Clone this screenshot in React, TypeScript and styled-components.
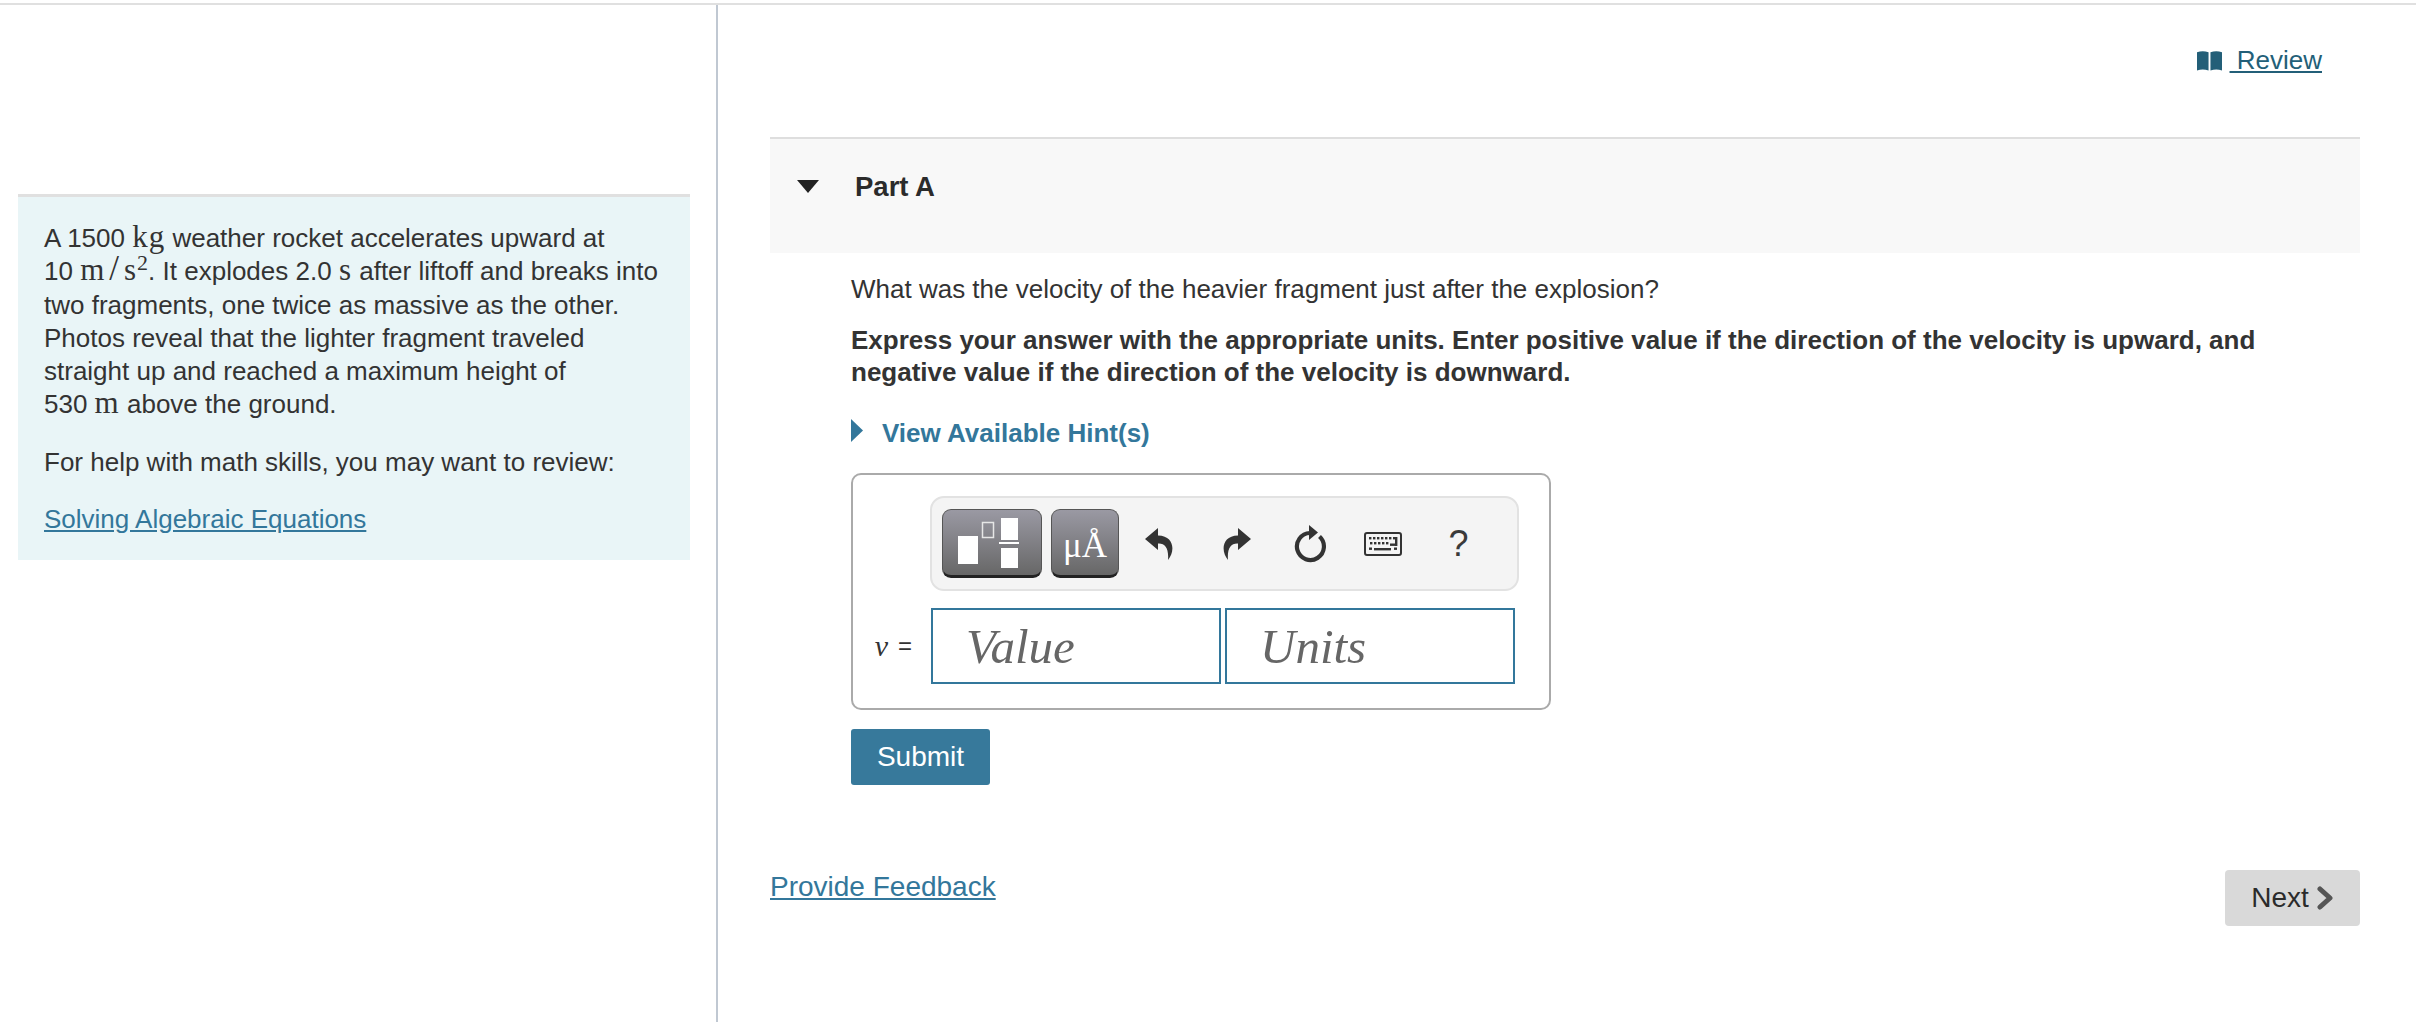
import React from 'react';
import styled, { createGlobalStyle } from 'styled-components';

const GlobalStyle = createGlobalStyle`
  html, body {
    margin: 0;
    padding: 0;
    background: #fff;
  }
  body {
    font-family: "Liberation Sans", Arial, sans-serif;
    color: #333;
  }
`;

const Page = styled.div`
  display: flex;
  width: 2416px;
  height: 1019px;
  box-sizing: border-box;
  border-top: 2px solid #e0e0e0;
  margin: 3px 0 0;
  overflow: hidden;
`;

const LeftColumn = styled.aside`
  width: 718px;
  flex-shrink: 0;
  box-sizing: border-box;
  border-right: 2px solid #c0c8d2;
  padding: 189px 26px 0 18px;
`;

const InfoPanel = styled.section`
  box-sizing: border-box;
  width: 672px;
  height: 366px;
  background: #e9f5f7;
  border-top: 3px solid #e0e0e0;
  padding: 25px 0 0 26px;
  font-size: 26px;
  line-height: 33.3px;
`;

const InfoText = styled.p`
  margin: 0 0 24px;
  white-space: nowrap;
`;

const MathUnit = styled.span`
  font-family: "Liberation Serif", serif;
  font-size: 31px;
  line-height: 0;
  letter-spacing: 1px;
`;

const MathSlash = styled.span`
  font-size: 35px;
  margin: 0 4px;
`;

const Sup = styled.sup`
  font-family: "Liberation Serif", serif;
  font-size: 22px;
  line-height: 0;
`;

const TextLink = styled.a`
  color: #33779b;
  text-decoration: underline;
  font-size: 26px;
`;

const RightColumn = styled.main`
  flex: 1;
  box-sizing: border-box;
  padding: 0 56px 0 52px;
`;

const ReviewRow = styled.div`
  display: flex;
  justify-content: flex-end;
  align-items: center;
  gap: 8px;
  height: 132px;
  padding: 0 38px 21px 0;
  box-sizing: border-box;
`;

const ReviewLink = styled.a`
  display: flex;
  align-items: center;
  color: #235f78;
  font-size: 26px;
  text-decoration: underline;
  white-space: pre;
`;

const PartHeader = styled.header`
  display: flex;
  align-items: flex-start;
  box-sizing: border-box;
  height: 116px;
  background: #f8f8f8;
  border-top: 2px solid #dedede;
  padding: 31px 0 0 27px;
`;

const Caret = styled.svg`
  display: block;
  flex-shrink: 0;
`;

const PartCaret = styled(Caret)`
  margin-top: 10px;
`;

const PartTitle = styled.h2`
  margin: 0 0 0 36px;
  font-size: 27.5px;
  line-height: 34px;
  font-weight: 700;
  color: #2b2b2b;
`;

const PartBody = styled.div`
  padding: 20px 0 0 81px;
`;

const Question = styled.p`
  margin: 0 0 18px;
  font-size: 26px;
  line-height: 33px;
`;

const Instruction = styled.p`
  margin: 0 0 28px;
  font-size: 26px;
  line-height: 32px;
  font-weight: 700;
`;

const HintRow = styled.div`
  display: flex;
  align-items: center;
  height: 34px;
  gap: 19px;
  margin-bottom: 23px;
  color: #33779b;
  font-size: 26px;
  font-weight: 700;
`;

const HintCaret = styled(Caret)`
  margin-top: -6px;
`;

const AnswerBox = styled.div`
  box-sizing: border-box;
  width: 700px;
  height: 237px;
  border: 2px solid #aaa;
  border-radius: 10px;
  padding: 21px 0 0 22px;
`;

const Toolbar = styled.div`
  display: flex;
  align-items: center;
  box-sizing: border-box;
  width: 589px;
  height: 95px;
  margin-left: 55px;
  padding: 0 0 0 10px;
  background: #f4f4f4;
  border: 2px solid #e2e2e2;
  border-radius: 14px;
`;

const TemplateButton = styled.div<{ $width: number }>`
  display: flex;
  align-items: center;
  justify-content: center;
  box-sizing: border-box;
  width: ${({ $width }) => $width}px;
  height: 69px;
  margin-right: 9px;
  border: 1px solid #555;
  border-bottom: 3px solid #222;
  border-radius: 9px;
  background: linear-gradient(#9a99a3, #676767);
`;

const FractionWrap = styled.span`
  display: flex;
  margin-right: 8px;
`;

const SymbolLabel = styled.span`
  font-family: "Liberation Serif", serif;
  font-size: 35px;
  line-height: 1;
  color: #fff;
  margin-top: 6px;
`;

const ToolIcon = styled.div<{ $width: number }>`
  display: flex;
  align-items: center;
  justify-content: center;
  width: ${({ $width }) => $width}px;
  height: 60px;
  color: #333;
`;

const HelpGlyph = styled.span`
  font-size: 36px;
  color: #3a3a3a;
  line-height: 1;
`;

const InputRow = styled.div`
  display: flex;
  align-items: center;
  margin-top: 17px;
`;

const VarLabel = styled.div`
  display: flex;
  align-items: center;
  justify-content: flex-end;
  gap: 10px;
  width: 56px;
  flex-shrink: 0;
  font-size: 24px;
  color: #333;
  padding-right: 19px;
  box-sizing: border-box;
`;

const VarItalic = styled.i`
  font-family: "Liberation Serif", serif;
  font-size: 30px;
`;

const InputBox = styled.div`
  box-sizing: border-box;
  width: 290px;
  height: 76px;
  margin-right: 4px;
  border: 2px solid #33779b;
  padding: 12px 0 0 33px;
  font-family: "Liberation Serif", serif;
  font-style: italic;
  font-size: 49px;
  line-height: 50px;
  color: #666;
`;

const SubmitButton = styled.button`
  display: block;
  width: 139px;
  height: 56px;
  margin-top: 19px;
  border: none;
  border-radius: 3px;
  background: #37799b;
  color: #fff;
  font-family: "Liberation Sans", Arial, sans-serif;
  font-size: 28px;
`;

const FooterRow = styled.div`
  display: flex;
  justify-content: space-between;
  align-items: flex-start;
  margin-top: 85px;
`;

const FeedbackLink = styled(TextLink)`
  margin-top: 1px;
  font-size: 28px;
`;

const NextButton = styled.button`
  display: flex;
  align-items: center;
  justify-content: center;
  gap: 7px;
  width: 135px;
  height: 56px;
  border: none;
  border-radius: 4px;
  background: #d9d9d9;
  color: #2b2b2b;
  font-family: "Liberation Sans", Arial, sans-serif;
  font-size: 28px;
`;

const BookIcon = () => (
  <svg width="25" height="22" viewBox="0 0 26 22" fill="#235f78">
    <path d="M0 2 C4 0.5 8 0.5 12 2 V21 C8 19.5 4 19.5 0 21 Z" />
    <path d="M14 2 C18 0.5 22 0.5 26 2 V21 C22 19.5 18 19.5 14 21 Z" />
  </svg>
);

const FractionIcon = () => (
  <svg width="61" height="50" viewBox="0 0 61 50" fill="#fff">
    <rect x="0" y="18" width="20" height="28" />
    <rect x="24.5" y="4.5" width="11" height="15" fill="none" stroke="#e6e6e6" strokeWidth="1.5" />
    <rect x="43" y="0" width="17" height="22" />
    <rect x="41" y="24" width="20" height="2" />
    <rect x="43" y="30" width="17" height="20" />
  </svg>
);

const UndoIcon = ({ flip }: { flip?: boolean }) => (
  <svg width="28" height="32" viewBox="0 0 28 32" fill="#333" style={flip ? { transform: 'scaleX(-1)' } : undefined}>
    <path d="M13 0 L0 11 L13 22 V15.5 C20 15 24 20 23 32 C30 24 30 8 13 7.5 Z" />
  </svg>
);

const RefreshIcon = () => (
  <svg width="34" height="38" viewBox="0 0 34 38" fill="none">
    <path d="M25.5 11.5 A13.5 13.5 0 1 1 16 8" stroke="#333" strokeWidth="4.2" />
    <path d="M15 0 L24 7.5 L15 15 Z" fill="#333" />
  </svg>
);

const KeyboardIcon = () => (
  <svg width="38" height="24" viewBox="0 0 38 24">
    <rect x="1" y="1" width="36" height="22" rx="2" fill="none" stroke="#333" strokeWidth="2" />
    <g fill="#333">
      {[5, 9, 13, 17, 21, 25, 29].map((x) => (
        <rect key={`a${x}`} x={x} y="5" width="2.4" height="2.4" />
      ))}
      {[6, 10, 14, 18, 22].map((x) => (
        <rect key={`b${x}`} x={x} y="10" width="2.4" height="2.4" />
      ))}
      <rect x="31" y="5" width="2.4" height="9" />
      <rect x="26" y="11.5" width="6" height="2.4" />
      <rect x="5" y="15.5" width="3" height="2.4" />
      <rect x="10" y="16" width="17" height="2.4" />
      <rect x="30" y="15.5" width="3" height="2.4" />
    </g>
  </svg>
);

export default function App() {
  return (
    <>
      <GlobalStyle />
      <Page>
        <LeftColumn>
          <InfoPanel>
            <InfoText>
              A 1500 <MathUnit>kg</MathUnit> weather rocket accelerates upward at
              <br />
              10 <MathUnit>m<MathSlash>/</MathSlash>s</MathUnit>
              <Sup>2</Sup>. It explodes 2.0 <MathUnit>s</MathUnit> after liftoff and breaks into
              <br />
              two fragments, one twice as massive as the other.
              <br />
              Photos reveal that the lighter fragment traveled
              <br />
              straight up and reached a maximum height of
              <br />
              530 <MathUnit>m</MathUnit> above the ground.
            </InfoText>
            <InfoText>For help with math skills, you may want to review:</InfoText>
            <TextLink href="#">Solving Algebraic Equations</TextLink>
          </InfoPanel>
        </LeftColumn>
        <RightColumn>
          <ReviewRow>
            <BookIcon />
            <ReviewLink href="#"> Review</ReviewLink>
          </ReviewRow>
          <PartHeader>
            <PartCaret width="22" height="13" viewBox="0 0 22 13">
              <path d="M0 0 H22 L11 13 Z" fill="#222" />
            </PartCaret>
            <PartTitle>Part A</PartTitle>
          </PartHeader>
          <PartBody>
            <Question>What was the velocity of the heavier fragment just after the explosion?</Question>
            <Instruction>
              Express your answer with the appropriate units. Enter positive value if the direction of the velocity is upward, and
              <br />
              negative value if the direction of the velocity is downward.
            </Instruction>
            <HintRow>
              <HintCaret width="12" height="23" viewBox="0 0 12 23">
                <path d="M0 0 L12 11.5 L0 23 Z" fill="#33779b" />
              </HintCaret>
              View Available Hint(s)
            </HintRow>
            <AnswerBox>
              <Toolbar>
                <TemplateButton $width={100}>
                  <FractionWrap>
                    <FractionIcon />
                  </FractionWrap>
                </TemplateButton>
                <TemplateButton $width={68}>
                  <SymbolLabel>μÅ</SymbolLabel>
                </TemplateButton>
                <ToolIcon $width={62}>
                  <UndoIcon />
                </ToolIcon>
                <ToolIcon $width={94}>
                  <UndoIcon flip />
                </ToolIcon>
                <ToolIcon $width={54}>
                  <RefreshIcon />
                </ToolIcon>
                <ToolIcon $width={89}>
                  <KeyboardIcon />
                </ToolIcon>
                <ToolIcon $width={63}>
                  <HelpGlyph>?</HelpGlyph>
                </ToolIcon>
              </Toolbar>
              <InputRow>
                <VarLabel>
                  <VarItalic>v</VarItalic>
                  <span>=</span>
                </VarLabel>
                <InputBox>Value</InputBox>
                <InputBox>Units</InputBox>
              </InputRow>
            </AnswerBox>
            <SubmitButton>Submit</SubmitButton>
          </PartBody>
          <FooterRow>
            <FeedbackLink href="#">Provide Feedback</FeedbackLink>
            <NextButton>
              Next
              <svg width="18" height="24" viewBox="0 0 18 24" fill="none">
                <path d="M4 3 L14 12 L4 21" stroke="#555" strokeWidth="5" strokeLinecap="round" strokeLinejoin="round" />
              </svg>
            </NextButton>
          </FooterRow>
        </RightColumn>
      </Page>
    </>
  );
}
